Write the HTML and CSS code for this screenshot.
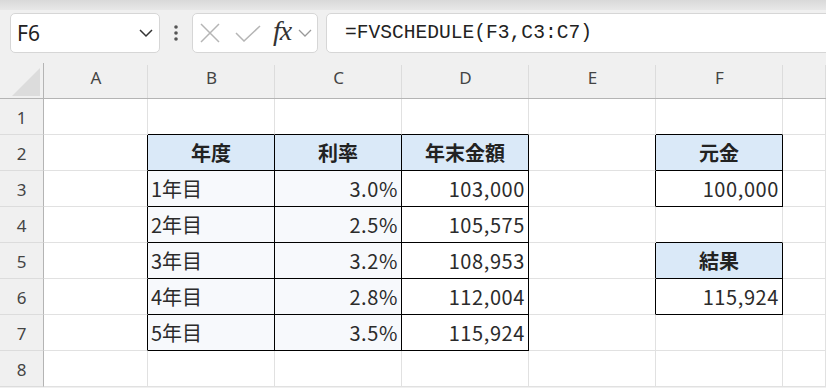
FILE: index.html
```html
<!DOCTYPE html>
<html lang="ja">
<head>
    <meta charset="UTF-8">
    <title>FVSCHEDULE</title>
    <link rel="stylesheet" href="styles.css">
</head>
<body>
    <div class="ribbon-edge"></div>
    <div class="formula-bar">
        <div class="name-box">
            <span>F6</span>
            <svg width="14" height="9" viewBox="0 0 14 9"><polyline points="1,1 7,7 13,1" fill="none" stroke="#333" stroke-width="1.5"/></svg>
        </div>
        <div class="dots">
            <svg width="6" height="18" viewBox="0 0 6 18"><circle cx="3" cy="3" r="1.8" fill="#555"/><circle cx="3" cy="9" r="1.8" fill="#555"/><circle cx="3" cy="15" r="1.8" fill="#555"/></svg>
        </div>
        <div class="fx-box">
            <svg class="cancel" width="20" height="20" viewBox="0 0 20 20"><path d="M1 1 L19 19 M19 1 L1 19" stroke="#b5b5b5" stroke-width="1.5"/></svg>
            <svg class="enter" width="26" height="17" viewBox="0 0 26 17"><polyline points="1,8 9,16 25,1" fill="none" stroke="#b5b5b5" stroke-width="1.5"/></svg>
            <span class="fx">fx</span>
            <svg class="more" width="14" height="8" viewBox="0 0 14 8"><polyline points="1,1 7,7 13,1" fill="none" stroke="#999" stroke-width="1.3"/></svg>
        </div>
        <div class="formula-input">=FVSCHEDULE(F3,C3:C7)</div>
    </div>

    <div class="sheet">
        <!-- column headers -->
        <div class="corner"><svg width="28" height="28" viewBox="0 0 28 28"><polygon points="28,0 28,28 0,28" fill="#dcdcdc"/></svg></div>
        <div class="col-head">A</div>
        <div class="col-head">B</div>
        <div class="col-head">C</div>
        <div class="col-head">D</div>
        <div class="col-head">E</div>
        <div class="col-head">F</div>
        <div class="col-head"></div>

        <!-- row 1 -->
        <div class="row-head">1</div>
        <div class="cell"></div>
        <div class="cell edge-b"></div>
        <div class="cell edge-b"></div>
        <div class="cell edge-b"></div>
        <div class="cell"></div>
        <div class="cell edge-b"></div>
        <div class="cell"></div>

        <!-- row 2 -->
        <div class="row-head">2</div>
        <div class="cell edge-r"></div>
        <div class="cell box head">年度</div>
        <div class="cell box head">利率</div>
        <div class="cell box head">年末金額</div>
        <div class="cell edge-r"></div>
        <div class="cell box head">元金</div>
        <div class="cell"></div>

        <!-- row 3 -->
        <div class="row-head">3</div>
        <div class="cell edge-r"></div>
        <div class="cell box tint">1年目</div>
        <div class="cell box tint num">3.0%</div>
        <div class="cell box num">103,000</div>
        <div class="cell edge-r"></div>
        <div class="cell box num">100,000</div>
        <div class="cell"></div>

        <!-- row 4 -->
        <div class="row-head">4</div>
        <div class="cell edge-r"></div>
        <div class="cell box tint">2年目</div>
        <div class="cell box tint num">2.5%</div>
        <div class="cell box num">105,575</div>
        <div class="cell"></div>
        <div class="cell edge-b"></div>
        <div class="cell"></div>

        <!-- row 5 -->
        <div class="row-head">5</div>
        <div class="cell edge-r"></div>
        <div class="cell box tint">3年目</div>
        <div class="cell box tint num">3.2%</div>
        <div class="cell box num">108,953</div>
        <div class="cell edge-r"></div>
        <div class="cell box head">結果</div>
        <div class="cell"></div>

        <!-- row 6 -->
        <div class="row-head">6</div>
        <div class="cell edge-r"></div>
        <div class="cell box tint">4年目</div>
        <div class="cell box tint num">2.8%</div>
        <div class="cell box num">112,004</div>
        <div class="cell edge-r"></div>
        <div class="cell box num">115,924</div>
        <div class="cell"></div>

        <!-- row 7 -->
        <div class="row-head">7</div>
        <div class="cell edge-r"></div>
        <div class="cell box tint">5年目</div>
        <div class="cell box tint num">3.5%</div>
        <div class="cell box num">115,924</div>
        <div class="cell"></div>
        <div class="cell"></div>
        <div class="cell"></div>

        <!-- row 8 -->
        <div class="row-head">8</div>
        <div class="cell"></div>
        <div class="cell"></div>
        <div class="cell"></div>
        <div class="cell"></div>
        <div class="cell"></div>
        <div class="cell"></div>
        <div class="cell"></div>
    </div>
</body>
</html>
```

FILE: styles.css
```css
body {
    margin: 0;
    width: 826px;
    height: 388px;
    overflow: hidden;
    background-color: #f0f0f0;
    font-family: 'Noto Sans', sans-serif;
}

.ribbon-edge {
    height: 10px;
    background: linear-gradient(#d9d9d9, #e8e8e8);
}

.formula-bar {
    display: flex;
    align-items: center;
    height: 53px;
    padding: 3px 0 10px 10px;
    box-sizing: border-box;
    overflow: hidden;
    background-color: #f0f0f0;
}

.name-box,
.fx-box,
.formula-input {
    height: 40px;
    box-sizing: border-box;
    background-color: white;
    border: 1px solid #d6d6d6;
    border-radius: 5px;
    display: flex;
    align-items: center;
}

.name-box {
    width: 150px;
    padding: 0 6px 0 6px;
    justify-content: space-between;
    font-size: 21px;
    color: #222;
}

.dots {
    width: 32px;
    display: flex;
    justify-content: center;
}

.fx-box {
    width: 126px;
    padding-left: 7px;
}

.fx-box .enter {
    margin-left: 15px;
}

.fx {
    margin-left: 12px;
    font-family: 'Liberation Serif', serif;
    font-style: italic;
    font-size: 28px;
    color: #333;
    line-height: 1;
    margin-bottom: 4px;
    letter-spacing: -1px;
}

.fx-box .more {
    margin-left: 7px;
}

.formula-input {
    flex: 1;
    margin-left: 8px;
    margin-right: -12px;
    padding-left: 18px;
    font-family: 'Liberation Mono', monospace;
    font-size: 19.6px;
    color: #222;
}

.sheet {
    display: grid;
    grid-template-columns: 44px 104px 127px 127px 127px 127px 127px 43px;
    grid-template-rows: repeat(9, 36px);
    background-color: white;
}

.corner {
    background-color: #f0f0f0;
    border-right: 1px solid #b4b4b4;
    border-bottom: 1px solid #b4b4b4;
    display: flex;
    justify-content: flex-end;
    align-items: flex-end;
    padding: 0 3px 2px 0;
}

.col-head {
    background: #f0f0f0 linear-gradient(#dcdcdc, #dcdcdc) right bottom / 1px 33px no-repeat;
    border-bottom: 1px solid #b4b4b4;
    display: flex;
    justify-content: center;
    align-items: center;
    padding-bottom: 7px;
    box-sizing: border-box;
    font-size: 17px;
    color: #444;
}

.row-head {
    background-color: #f0f0f0;
    border-right: 1px solid #b4b4b4;
    border-bottom: 1px solid #dcdcdc;
    display: flex;
    justify-content: center;
    align-items: center;
    padding-top: 2px;
    font-size: 17px;
    color: #444;
}

.cell {
    border-right: 1px solid #e1e1e1;
    border-bottom: 1px solid #e1e1e1;
    display: flex;
    align-items: center;
    padding: 0 3px;
    font-family: 'Noto Sans CJK JP', sans-serif;
    font-size: 20px;
    color: #2b2b2b;
    white-space: nowrap;
}

/* black borders of the two tables */
.box {
    border-right-color: #000;
    border-bottom-color: #000;
}

.edge-b {
    border-bottom-color: #000;
}

.edge-r {
    border-right-color: #000;
}

.head {
    background-color: #dae9f8;
    justify-content: center;
    font-weight: bold;
    color: #222;
}

.tint {
    background-color: #f7f9fc;
}

.num {
    justify-content: flex-end;
    letter-spacing: 0.6px;
}
```
